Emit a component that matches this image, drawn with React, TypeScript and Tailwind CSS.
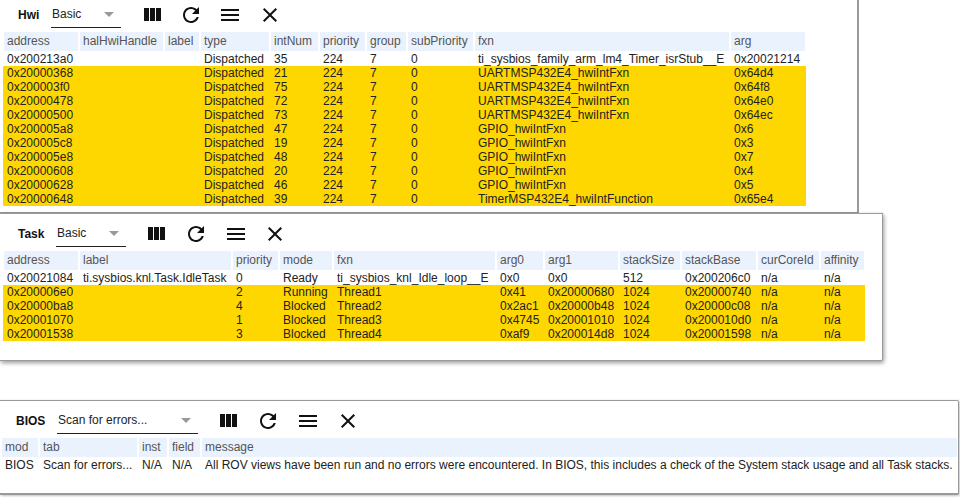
const hwiCols = 'grid grid-cols-[76px_85px_36px_70px_49px_47px_41px_67px_256px_76px]'
const taskCols = 'grid grid-cols-[76px_153px_47px_54px_163px_48px_75px_62px_76px_63px_45px]'
const biosCols = 'grid grid-cols-[38px_99px_30px_33px_757px]'

const hwiHead = ['address', 'halHwiHandle', 'label', 'type', 'intNum', 'priority', 'group', 'subPriority', 'fxn', 'arg']
const hwiRows = [
  ['0x200213a0', '', '', 'Dispatched', '35', '224', '7', '0', 'ti_sysbios_family_arm_lm4_Timer_isrStub__E', '0x20021214'],
  ['0x20000368', '', '', 'Dispatched', '21', '224', '7', '0', 'UARTMSP432E4_hwiIntFxn', '0x64d4'],
  ['0x200003f0', '', '', 'Dispatched', '75', '224', '7', '0', 'UARTMSP432E4_hwiIntFxn', '0x64f8'],
  ['0x20000478', '', '', 'Dispatched', '72', '224', '7', '0', 'UARTMSP432E4_hwiIntFxn', '0x64e0'],
  ['0x20000500', '', '', 'Dispatched', '73', '224', '7', '0', 'UARTMSP432E4_hwiIntFxn', '0x64ec'],
  ['0x200005a8', '', '', 'Dispatched', '47', '224', '7', '0', 'GPIO_hwiIntFxn', '0x6'],
  ['0x200005c8', '', '', 'Dispatched', '19', '224', '7', '0', 'GPIO_hwiIntFxn', '0x3'],
  ['0x200005e8', '', '', 'Dispatched', '48', '224', '7', '0', 'GPIO_hwiIntFxn', '0x7'],
  ['0x20000608', '', '', 'Dispatched', '20', '224', '7', '0', 'GPIO_hwiIntFxn', '0x4'],
  ['0x20000628', '', '', 'Dispatched', '46', '224', '7', '0', 'GPIO_hwiIntFxn', '0x5'],
  ['0x20000648', '', '', 'Dispatched', '39', '224', '7', '0', 'TimerMSP432E4_hwiIntFunction', '0x65e4'],
]

const taskHead = ['address', 'label', 'priority', 'mode', 'fxn', 'arg0', 'arg1', 'stackSize', 'stackBase', 'curCoreId', 'affinity']
const taskRows = [
  ['0x20021084', 'ti.sysbios.knl.Task.IdleTask', '0', 'Ready', 'ti_sysbios_knl_Idle_loop__E', '0x0', '0x0', '512', '0x200206c0', 'n/a', 'n/a'],
  ['0x200006e0', '', '2', 'Running', 'Thread1', '0x41', '0x20000680', '1024', '0x20000740', 'n/a', 'n/a'],
  ['0x20000ba8', '', '4', 'Blocked', 'Thread2', '0x2ac1', '0x20000b48', '1024', '0x20000c08', 'n/a', 'n/a'],
  ['0x20001070', '', '1', 'Blocked', 'Thread3', '0x4745', '0x20001010', '1024', '0x200010d0', 'n/a', 'n/a'],
  ['0x20001538', '', '3', 'Blocked', 'Thread4', '0xaf9', '0x200014d8', '1024', '0x20001598', 'n/a', 'n/a'],
]

const biosHead = ['mod', 'tab', 'inst', 'field', 'message']
const biosRows = [
  ['BIOS', 'Scan for errors...', 'N/A', 'N/A', 'All ROV views have been run and no errors were encountered. In BIOS, this includes a check of the System stack usage and all Task stacks.'],
]

function Icon({ d, className = '' }: { d: string; className?: string }) {
  return (
    <svg viewBox="0 0 24 24" className={`w-6 h-6 shrink-0 fill-[#111] ${className}`}>
      <path d={d} />
    </svg>
  )
}

type ToolbarProps = {
  title: string
  value: string
  titleClass: string
  selectClass: string
  barClass: string
  iconsClass: string
  closeClass: string
}

function Toolbar({ title, value, titleClass, selectClass, barClass, iconsClass, closeClass }: ToolbarProps) {
  return (
    <div className={`flex items-center ${barClass}`}>
      <div className={`font-bold text-[#111] shrink-0 ${titleClass}`}>{title}</div>
      <div className={`flex items-center justify-between h-[26px] pl-px pr-[7px] pb-px border-b border-[#222] shrink-0 ${selectClass}`}>
        <span className="text-[#222]">{value}</span>
        <svg viewBox="0 0 10 5" className="w-[10px] h-[5px] fill-[#999]">
          <path d="M0 0h10L5 5z" />
        </svg>
      </div>
      <div className={`flex items-center ${iconsClass}`}>
        <Icon d="M10 18h5V5h-5v13zm-6 0h5V5H4v13zM16 5v13h5V5h-5z" />
        <Icon d="M17.65 6.35C16.2 4.9 14.21 4 12 4c-4.42 0-7.99 3.58-7.99 8s3.57 8 7.99 8c3.73 0 6.84-2.55 7.73-6h-2.08c-.82 2.33-3.04 4-5.65 4-3.31 0-6-2.69-6-6s2.69-6 6-6c1.66 0 3.14.69 4.22 1.78L13 11h7V4l-2.35 2.35z" />
        <Icon d="M3 18h18v-2H3v2zm0-5h18v-2H3v2zm0-7v2h18V6H3z" />
        <Icon d="M19 6.41L17.59 5 12 10.59 6.41 5 5 6.41 10.59 12 5 17.59 6.41 19 12 13.41 17.59 19 19 17.59 13.41 12 19 6.41z" className={closeClass} />
      </div>
    </div>
  )
}

function Table({ cols, head, rows, className, plainRows }: { cols: string; head: string[]; rows: string[][]; className: string; plainRows: number }) {
  return (
    <div className={`w-fit ${className}`}>
      <div className={`${cols} h-[20px]`}>
        {head.map((h) => (
          <div key={h} className="mx-px h-[19px] pl-[3px] bg-[#eaf2fe] text-[#555] leading-[19px] whitespace-nowrap">
            {h}
          </div>
        ))}
      </div>
      {rows.map((row, i) => (
        <div key={i} className={`${cols} h-[14px] ${i >= plainRows ? 'bg-[#ffd700]' : ''}`}>
          {row.map((c, j) => (
            <div key={j} className="pl-1 leading-[14px] text-[#222] whitespace-nowrap">
              {c}
            </div>
          ))}
        </div>
      ))}
    </div>
  )
}

export default function App() {
  return (
    <div className="h-[497px] w-[960px] overflow-hidden bg-white text-[12px] font-['Liberation_Sans',Arial,sans-serif]">
      <div className="w-[859px] h-[213px] bg-white border-r-2 border-b border-[#999]">
        <Toolbar
          title="Hwi"
          value="Basic"
          barClass="h-8 pb-[2px]"
          titleClass="w-[51px] pl-[18px]"
          selectClass="w-[70px]"
          iconsClass="gap-[15px] ml-[19px]"
          closeClass="ml-px"
        />
        <Table cols={hwiCols} head={hwiHead} rows={hwiRows} className="ml-[3px]" plainRows={1} />
      </div>
      <div className="relative w-[883px] h-[148px] bg-white border-t border-r border-b border-[#999] rounded-br-[2px] shadow-[1px_2px_4px_rgba(0,0,0,0.4)]">
        <Toolbar
          title="Task"
          value="Basic"
          barClass="h-[37px] pt-[3px]"
          titleClass="w-[56px] pl-[18px]"
          selectClass="w-[70px]"
          iconsClass="gap-4 ml-[18px]"
          closeClass="-ml-px"
        />
        <Table cols={taskCols} head={taskHead} rows={taskRows} className="ml-[3px]" plainRows={1} />
      </div>
      <div className="mt-[39px] w-[959px] h-[95px] bg-white border-t border-r border-b-2 border-[#999] rounded-r-[2px] shadow-[1px_1px_3px_rgba(0,0,0,0.25)]">
        <Toolbar
          title="BIOS"
          value="Scan for errors..."
          barClass="h-[37px] pt-[3px]"
          titleClass="w-[57px] pl-4"
          selectClass="w-[141px]"
          iconsClass="gap-4 ml-[18px]"
          closeClass=""
        />
        <Table cols={biosCols} head={biosHead} rows={biosRows} className="ml-px" plainRows={1} />
      </div>
    </div>
  )
}
